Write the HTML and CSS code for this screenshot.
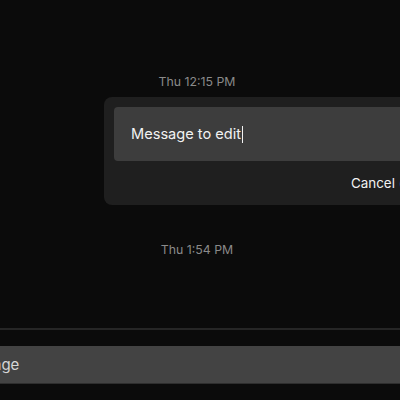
FILE: index.html
```html
<!DOCTYPE html>
<html lang="en">
<head>
    <meta charset="UTF-8">
    <meta name="viewport" content="width=device-width, initial-scale=1.0">
    <title>Chat - edit message</title>
    <link rel="stylesheet" href="styles.css">
</head>
<body>
    <div class="chat">
        <div class="messages">
            <div class="timestamp">Thu 12:15 PM</div>

            <div class="edit-card">
                <div class="edit-input">
                    <span class="edit-text">Message to edit</span><span class="caret"></span>
                </div>
                <div class="edit-actions">
                    <span class="action">Cancel (esc)</span>
                    <span class="action save">Save (enter)</span>
                </div>
            </div>

            <div class="timestamp second">Thu 1:54 PM</div>
        </div>

        <div class="composer">
            <div class="composer-input">Send a message</div>
        </div>
    </div>
</body>
</html>
```

FILE: styles.css
```css
* {
    box-sizing: border-box;
}

body {
    margin: 0;
    background-color: #0b0b0b;
    font-family: Inter, "Noto Sans", sans-serif;
    color: #f2f2f2;
    overflow: hidden;
    height: 400px;
}

.chat {
    width: 400px;
    height: 400px;
    display: flex;
    flex-direction: column;
    overflow: hidden;
}

.messages {
    flex: 1;
    padding-top: 74px;
}

.timestamp {
    font-size: 12.3px;
    line-height: 16px;
    color: #8a8a8a;
    text-align: center;
    padding-right: 6px;
}

.timestamp.second {
    margin-top: 37px;
}

.edit-card {
    margin-top: 7px;
    margin-left: 104px;
    margin-right: -200px;
    background-color: #1f1f1f;
    border-radius: 8px;
    padding: 10px;
}

.edit-input {
    height: 54px;
    background-color: #3d3d3d;
    border-radius: 4px;
    padding-left: 17px;
    display: flex;
    align-items: center;
    font-size: 14.6px;
}

.caret {
    display: inline-block;
    width: 1px;
    height: 17px;
    background-color: #f2f2f2;
    margin-left: 1px;
}

.edit-actions {
    margin-top: 10px;
    height: 24px;
    display: flex;
    align-items: center;
    gap: 16px;
    padding-left: 237px;
    font-size: 13.4px;
}

.composer {
    border-top: 2px solid #262626;
    padding: 16px 0;
    margin-left: -114px;
}

.composer-input {
    height: 38px;
    background-color: #434343;
    border-bottom: 1px solid #2e2e2e;
    padding-left: 16px;
    display: flex;
    align-items: center;
    font-size: 15px;
    color: #d6d6d6;
}
```
